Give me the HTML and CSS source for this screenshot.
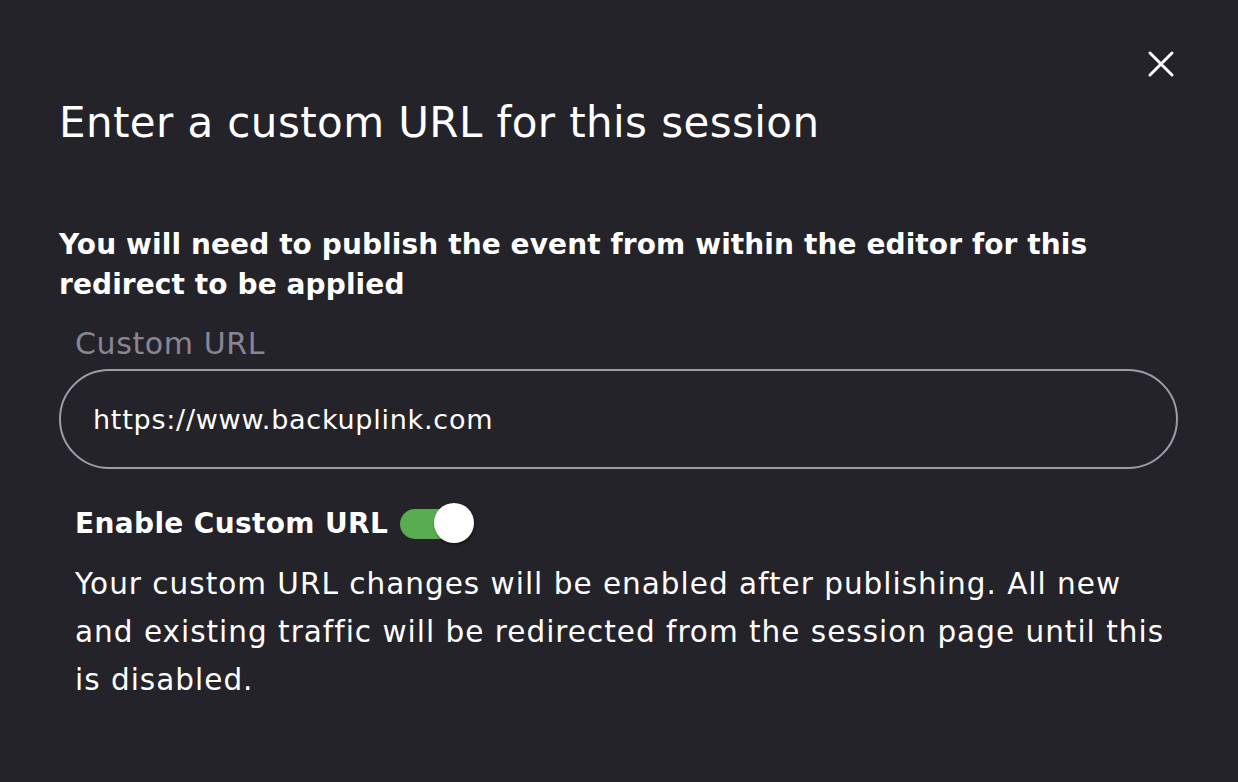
FILE: index.html
```html
<!DOCTYPE html>
<html>
<head>
<meta charset="utf-8">
<link rel="stylesheet" href="styles.css">
</head>
<body>
<div class="modal">
  <button class="close" aria-label="Close">
    <svg width="28" height="28" viewBox="0 0 28 28"><path d="M3 3L25 25M25 3L3 25" stroke="#fff" stroke-width="3" stroke-linecap="round"/></svg>
  </button>
  <h1 class="title">Enter a custom URL for this session</h1>
  <p class="notice">You will need to publish the event from within the editor for this redirect to be applied</p>
  <div class="field">
    <label class="label">Custom URL</label>
    <div class="input">https://www.backuplink.com</div>
  </div>
  <div class="toggle-row">
    <span class="toggle-label">Enable Custom URL</span>
    <span class="switch"><span class="thumb"></span></span>
  </div>
  <p class="desc">Your custom URL changes will be enabled after publishing. All new and existing traffic will be redirected from the session page until this is disabled.</p>
</div>
</body>
</html>
```

FILE: styles.css
```css
html, body {
  margin: 0;
  padding: 0;
  background: #25232a;
  width: 1238px;
  height: 782px;
  overflow: hidden;
}
.modal {
  position: relative;
  box-sizing: border-box;
  padding: 96px 60px 0 59px;
  font-family: "DejaVu Sans", sans-serif;
  color: #fff;
}
.close {
  position: absolute;
  top: 50px;
  right: 63px;
  background: none;
  border: 0;
  padding: 0;
  width: 28px;
  height: 28px;
}
.title {
  margin: 0;
  font-size: 42px;
  font-weight: 400;
  letter-spacing: 0.4px;
  line-height: 54px;
}
.notice {
  margin: 75px 0 0;
  font-size: 28px;
  font-weight: 700;
  letter-spacing: 0.1px;
  line-height: 40px;
}
.field {
  margin-top: 20px;
}
.label {
  display: block;
  padding-left: 16px;
  font-size: 30px;
  letter-spacing: 0.6px;
  line-height: 38px;
  color: #8a8594;
}
.input {
  margin-top: 6px;
  box-sizing: border-box;
  height: 100px;
  border: 2px solid #a09ba9;
  border-radius: 50px;
  padding: 0 32px;
  display: flex;
  align-items: center;
  font-size: 27px;
  letter-spacing: 0.75px;
}
.toggle-row {
  margin-top: 35px;
  padding-left: 16px;
  display: flex;
  align-items: center;
  gap: 12px;
}
.toggle-label {
  font-size: 28px;
  font-weight: 700;
  letter-spacing: 0.35px;
  line-height: 40px;
}
.switch {
  position: relative;
  width: 66px;
  height: 30px;
  border-radius: 15px;
  background: #58ad51;
}
.thumb {
  position: absolute;
  right: -8px;
  top: -6px;
  width: 40px;
  height: 40px;
  border-radius: 50%;
  background: #fff;
  box-shadow: 1px 2px 3px rgba(0,0,0,0.4);
}
.desc {
  margin: 16px 0 0;
  padding-left: 16px;
  font-size: 29.5px;
  letter-spacing: 1px;
  line-height: 48px;
}
```
